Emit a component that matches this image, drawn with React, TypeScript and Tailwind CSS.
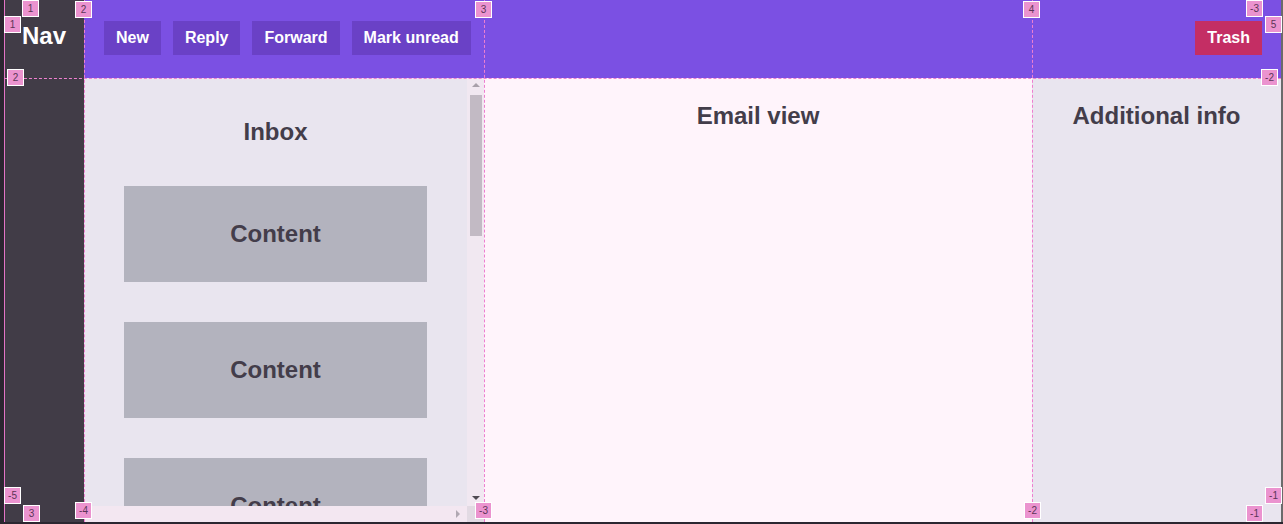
import React from 'react';

const font = { fontFamily: '"Liberation Sans", Arial, sans-serif' };

const Badge = ({ label, className }: { label: string; className: string }) => (
  <div
    className={`absolute flex h-[17px] w-[17px] items-center justify-center border border-white bg-[#eb93cf] text-[10px] leading-none text-[#5b3556] ${className}`}
  >
    {label}
  </div>
);

const ToolButton = ({ label, danger }: { label: string; danger?: boolean }) => (
  <button
    className={`px-3 py-2 text-base leading-[18px] font-bold text-white ${
      danger ? 'bg-[#c42e64]' : 'bg-[#6a41c6]'
    }`}
  >
    {label}
  </button>
);

const Card = () => (
  <div className="flex h-[96px] w-[303px] shrink-0 items-center justify-center bg-[#b3b3be] text-2xl font-bold text-[#433d4a]">
    Content
  </div>
);

export default function App() {
  return (
    <div className="relative flex h-[524px] w-[1283px] overflow-hidden bg-[#2b2630]" style={font}>
      <div className="w-[4px] shrink-0 bg-[#2b2630]" />
      <div className="grid h-[522px] flex-1 grid-cols-[80px_400px_548px_1fr] grid-rows-[78px_1fr] border-r-2 border-[#6b6b6b]">
        {/* Nav */}
        <div className="row-span-2 flex justify-center bg-[#413c47] pt-[22px]">
          <span className="text-2xl leading-[28px] font-bold text-white">Nav</span>
        </div>

        {/* Toolbar */}
        <div className="col-span-3 flex items-start gap-3 bg-[#7b50e3] px-5 pt-[21px] pr-[19px]">
          <ToolButton label="New" />
          <ToolButton label="Reply" />
          <ToolButton label="Forward" />
          <ToolButton label="Mark unread" />
          <div className="flex-1" />
          <ToolButton label="Trash" danger />
        </div>

        {/* Inbox */}
        <div className="flex min-h-0 flex-col bg-[#e9e5ef]">
          <div className="flex min-h-0 flex-1">
            <div className="flex flex-1 flex-col items-center gap-10 overflow-hidden pt-10">
              <h2 className="text-2xl leading-[28px] font-bold text-[#433d4a]">Inbox</h2>
              <Card />
              <Card />
              <Card />
            </div>
            <div className="flex w-[17px] flex-col items-center bg-[#f1e8f1] pt-[5px] pb-[6px]">
              <div className="h-0 w-0 border-x-[4px] border-b-[4px] border-x-transparent border-b-[#a8a0aa]" />
              <div className="mt-[8px] h-[141px] w-[12px] bg-[#c2bac4]" />
              <div className="flex-1" />
              <div className="h-0 w-0 border-x-[4px] border-t-[4px] border-x-transparent border-t-[#4f4a52]" />
            </div>
          </div>
          <div className="flex h-[16px] shrink-0">
            <div className="flex flex-1 items-center justify-between bg-[#f3e7f1] px-[7px]">
              <div className="h-[7px] w-px bg-[#b7b0ba]" />
              <div className="h-0 w-0 border-y-[4px] border-l-[4px] border-y-transparent border-l-[#b0a8b2]" />
            </div>
            <div className="w-[17px] bg-[#e2dae3]" />
          </div>
        </div>

        {/* Email view */}
        <div className="flex flex-col items-center bg-[#fff4fb] pt-[24px]">
          <h2 className="text-2xl leading-[28px] font-bold text-[#433d4a]">Email view</h2>
        </div>

        {/* Additional info */}
        <div className="flex flex-col items-center bg-[#e9e5ef] pt-[24px]">
          <h2 className="text-2xl leading-[28px] font-bold text-[#433d4a]">Additional info</h2>
        </div>
      </div>

      {/* grid inspector overlay */}
      <div className="pointer-events-none absolute top-0 bottom-[2px] left-[4px] w-px bg-[#e374c6]" />
      <div className="pointer-events-none absolute top-0 bottom-[2px] left-[84px] border-l border-dashed border-[#ee7fd0]" />
      <div className="pointer-events-none absolute top-0 bottom-[2px] left-[484px] border-l border-dashed border-[#ee7fd0]" />
      <div className="pointer-events-none absolute top-0 bottom-[2px] left-[1032px] border-l border-dashed border-[#ee7fd0]" />
      <div className="pointer-events-none absolute top-[78px] right-[2px] left-[4px] border-t border-dashed border-[#ee7fd0]" />

      <Badge label="1" className="top-0 left-[22px]" />
      <Badge label="1" className="top-[16px] left-[4px]" />
      <Badge label="2" className="top-[1px] left-[75px]" />
      <Badge label="3" className="top-[1px] left-[475px]" />
      <Badge label="4" className="top-[1px] left-[1023px]" />
      <Badge label="-3" className="top-0 left-[1246px]" />
      <Badge label="5" className="top-[16px] left-[1265px]" />
      <Badge label="2" className="top-[69px] left-[7px]" />
      <Badge label="-2" className="top-[69px] left-[1261px]" />
      <Badge label="-5" className="top-[487px] left-[4px]" />
      <Badge label="3" className="top-[505px] left-[23px]" />
      <Badge label="-4" className="top-[502px] left-[75px]" />
      <Badge label="-3" className="top-[502px] left-[475px]" />
      <Badge label="-2" className="top-[502px] left-[1024px]" />
      <Badge label="-1" className="top-[487px] left-[1265px]" />
      <Badge label="-1" className="top-[505px] left-[1246px]" />
    </div>
  );
}
